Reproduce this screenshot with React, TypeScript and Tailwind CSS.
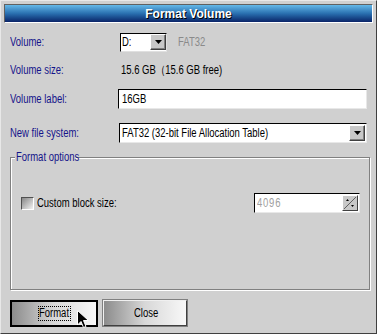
import React from "react";

function T({ children, className = "" }: { children: React.ReactNode; className?: string }) {
  return (
    <span className={`inline-block whitespace-nowrap origin-left scale-x-[0.79] ${className}`}>
      {children}
    </span>
  );
}

function DropBtn() {
  return (
    <div className="w-[16px] h-[16px] bg-[#c8c8c8] border border-t-white border-l-white border-r-[#404040] border-b-[#404040] flex items-center justify-center shadow-[inset_-1px_-1px_0_#808080]">
      <svg width="7" height="4" viewBox="0 0 7 4">
        <polygon points="0,0 7,0 3.5,4" fill="#000" />
      </svg>
    </div>
  );
}

export default function App() {
  return (
    <div
      className="w-[377px] h-[334px] bg-[#d0d0d0] relative border border-t-[#e8e8e8] border-l-[#e8e8e8] border-r-[#404040] border-b-[#404040] overflow-hidden"
      style={{ fontFamily: '"Liberation Sans", Arial, sans-serif' }}
    >
      <div className="mx-[3px] mt-[3px] h-[19px] border border-t-[#606060] border-l-[#606060] border-r-white border-b-white bg-gradient-to-b from-[#64b8e8] via-[#2a70b0] to-[#0c2468] flex items-center justify-center">
        <span className="text-white font-bold text-[12px] [text-shadow:1px_1px_0_#000]">
          Format Volume
        </span>
      </div>

      <div className="px-[9px] text-[12px]">
        {/* Volume */}
        <div className="mt-[10px] h-[18px] flex items-center">
          <div className="w-[110px] text-[#14148a]"><T>Volume:</T></div>
          <div className="w-[47px] h-[19px] bg-white border border-t-black border-l-black border-r-[#e0e0e0] border-b-[#e0e0e0] flex items-center justify-between">
            <span className="pl-[1px] text-black"><T>D:</T></span>
            <DropBtn />
          </div>
          <div className="ml-[11px] text-[#8a8a8a]"><T>FAT32</T></div>
        </div>

        {/* Volume size */}
        <div className="mt-[10px] h-[18px] flex items-center">
          <div className="w-[111px] text-[#14148a]"><T>Volume size:</T></div>
          <div className="text-black"><T>15.6 GB（15.6 GB free)</T></div>
        </div>

        {/* Volume label */}
        <div className="mt-[10px] h-[20px] flex items-center">
          <div className="w-[109px] text-[#14148a]"><T>Volume label:</T></div>
          <div className="w-[250px] h-[20px] bg-white border border-t-black border-l-black border-r-[#e8e8e8] border-b-[#e8e8e8] flex items-center pl-[3px] text-black">
            <T>16GB</T>
          </div>
        </div>

        {/* New file system */}
        <div className="mt-[14px] h-[20px] flex items-center">
          <div className="w-[110px] text-[#14148a]"><T>New file system:</T></div>
          <div className="w-[250px] h-[20px] bg-white border border-t-black border-l-black border-r-[#e8e8e8] border-b-[#e8e8e8] flex items-center justify-between pr-[1px]">
            <div className="pl-[2px] text-black"><T>FAT32 (32-bit File Allocation Table)</T></div>
            <DropBtn />
          </div>
        </div>

        {/* Group */}
        <div className="relative mt-[14px] w-[360px] h-[133px] border border-[#808080] shadow-[inset_1px_1px_0_#fff,1px_1px_0_#fff]">
          <div className="absolute left-[4px] top-[-9px] w-[61px] bg-[#d0d0d0] px-[1px] text-[#14148a] leading-[16px]">
            <T>Format options</T>
          </div>
          <div className="mt-[35px] h-[20px] flex items-center pl-[10px] pr-[9px]">
            <div className="w-[13px] h-[13px] border border-t-[#505050] border-l-[#505050] border-r-white border-b-white bg-gradient-to-br from-[#888] to-[#f4f4f4]" />
            <div className="ml-[3px] text-black"><T>Custom block size:</T></div>
            <div className="ml-auto w-[106px] h-[20px] bg-white border border-t-black border-l-black border-r-[#e8e8e8] border-b-[#e8e8e8] flex items-center justify-between pr-[1px]">
              <div className="pl-[2px] text-[#a0a0a0]"><T className="tracking-[1px]">4096</T></div>
              <div className="w-[16px] h-[16px] bg-[#c8c8c8] border border-t-white border-l-white border-r-[#404040] border-b-[#404040] relative">
                <svg width="14" height="14" viewBox="0 0 14 14" className="absolute left-0 top-0">
                  <line x1="1" y1="13" x2="13" y2="1" stroke="#606060" strokeWidth="1" />
                  <polygon points="3,5 6,5 4.5,3" fill="#000" />
                  <polygon points="8,9 11,9 9.5,11" fill="#000" />
                </svg>
              </div>
            </div>
          </div>
        </div>

        {/* Buttons */}
        <div className="mt-[10px] flex gap-[5px]">
          <div className="w-[88px] h-[27px] border-2 border-black bg-gradient-to-r from-[#8c8c8c] via-[#d8d8d8] to-[#f8f8f8] flex items-center justify-center">
            <div className="w-[33px] h-[15px] border border-dotted border-black text-black flex items-center">
              <T className="leading-[13px]">Format</T>
            </div>
          </div>
          <div className="w-[84px] h-[26px] border border-t-[#f0f0f0] border-l-[#f0f0f0] border-r-[#404040] border-b-[#404040] shadow-[0_0_0_1px_#808080] bg-gradient-to-r from-[#8c8c8c] via-[#d8d8d8] to-[#f8f8f8] flex items-center justify-center text-black">
            <div className="w-[22px]"><T>Close</T></div>
          </div>
        </div>
      </div>

      {/* cursor */}
      <svg
        width="13"
        height="20"
        viewBox="0 0 13 20"
        className="absolute left-[76px] top-[309px]"
      >
        <polygon
          points="0.5,0.5 0.5,15 4,11.5 6.5,17.5 9,16.5 6.5,10.5 11.5,10.5"
          fill="#000"
          stroke="#fff"
          strokeWidth="1"
        />
      </svg>
    </div>
  );
}
